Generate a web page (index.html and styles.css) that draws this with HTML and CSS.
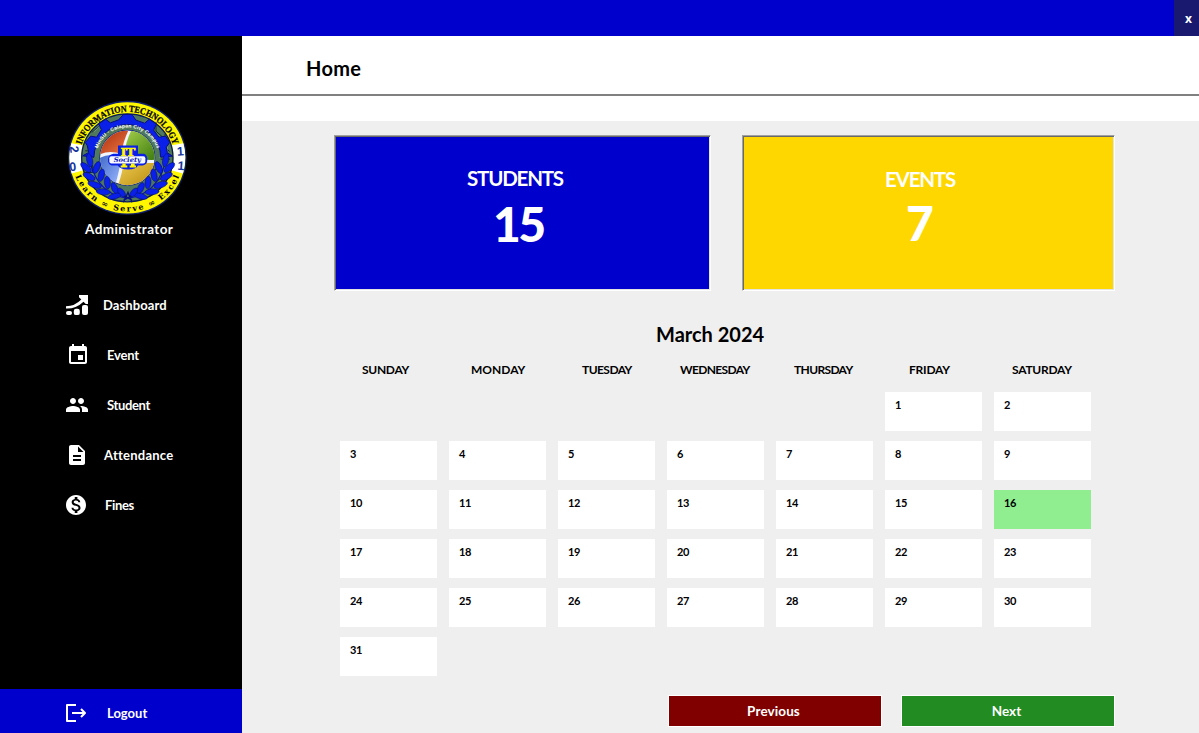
FILE: index.html
```html
<!DOCTYPE html>
<html lang="en">
<head>
<meta charset="utf-8">
<title>Home</title>
<link rel="stylesheet" href="styles.css">
</head>
<body>
<div class="window">
  <header class="titlebar"><button class="close">x</button></header>
  <div class="body">
    <aside class="sidebar">
      <div class="profile">
        <svg class="logo" viewBox="21 21 360 348">
          <defs>
            <path id="arcTop" d="M59 196a143 138 0 0 1 286 0"/>
            <path id="arcCampus" d="M109 196a93 91 0 0 1 186 0"/>
            <path id="arcBottom" d="M36 196a166 161 0 0 0 332 0"/>
            <clipPath id="globe"><circle cx="202" cy="196" r="82"/></clipPath>
            <linearGradient id="red" x1="0" y1="0" x2="1" y2="1"><stop offset="0" stop-color="#a82b0c"/><stop offset="1" stop-color="#f07a45"/></linearGradient>
            <linearGradient id="green" x1="0" y1="0" x2="1" y2="1"><stop offset="0" stop-color="#a6cf4a"/><stop offset="1" stop-color="#3d7c10"/></linearGradient>
            <linearGradient id="blue" x1="0" y1="0" x2="1" y2="1"><stop offset="0" stop-color="#3f68c8"/><stop offset="1" stop-color="#9db8ff"/></linearGradient>
            <linearGradient id="gold" x1="0" y1="0" x2="1" y2="1"><stop offset="0" stop-color="#f2d35c"/><stop offset="1" stop-color="#b98a0a"/></linearGradient>
            <g id="branch">
              <path d="M196 316Q118 304 91 214" fill="none" stroke="#0714b8" stroke-width="4"/>
              <g fill="#0a20e8" stroke="#020b70" stroke-width="1.5">
                <ellipse cx="89" cy="203" rx="9" ry="20" transform="rotate(-12 89 203)"/>
                <ellipse cx="78" cy="225" rx="9" ry="20" transform="rotate(-48 78 225)"/>
                <ellipse cx="110" cy="225" rx="9" ry="19" transform="rotate(24 110 225)"/>
                <ellipse cx="87" cy="252" rx="9" ry="20" transform="rotate(-62 87 252)"/>
                <ellipse cx="124" cy="248" rx="9" ry="19" transform="rotate(12 124 248)"/>
                <ellipse cx="104" cy="277" rx="9" ry="21" transform="rotate(-72 104 277)"/>
                <ellipse cx="142" cy="270" rx="9" ry="19" transform="rotate(-5 142 270)"/>
                <ellipse cx="130" cy="298" rx="9" ry="21" transform="rotate(-86 130 298)"/>
                <ellipse cx="164" cy="287" rx="9" ry="18" transform="rotate(-25 164 287)"/>
                <ellipse cx="164" cy="311" rx="8" ry="21" transform="rotate(-105 164 311)"/>
                <ellipse cx="185" cy="300" rx="8" ry="16" transform="rotate(-40 185 300)"/>
              </g>
            </g>
          </defs>
          <ellipse cx="202" cy="196" rx="178" ry="171" fill="#10206e"/>
          <ellipse cx="202" cy="196" rx="174" ry="167" fill="#fff600"/>
          <path d="M34 152Q22 196 35 243L68 234Q58 196 68 158ZM370 152Q382 196 369 243L336 234Q346 196 336 158Z" fill="#fff"/>
          <ellipse cx="202" cy="196" rx="137" ry="132" fill="#50785c" stroke="#0b1d58" stroke-width="4"/>
          <g fill="none" stroke="#16301f" stroke-width="3">
            <path d="M95 120l24-20v-15M115 135l20-25M288 88v28l20 18M270 80v22M315 125v40l14 12M76 175h24v20M72 240h26v-22M130 250v-25l-20-16M304 220v36l-18 14M330 200h-28M280 240l16-22M108 165l-16-12M300 176h24"/>
          </g>
          <g fill="none" stroke="#8bb19a" stroke-width="2">
            <path d="M102 118l22-22M84 165h20v28M280 94v20l24 22M322 150v34M82 245h22v-20M312 220v28l-10 16M138 262v-22M270 262v-26M120 112l12-14M298 195l22-10"/>
          </g>
          <path d="M68 190L86 180 82 160 76 150 92 131 110 134 124 112 116 94 137 80 151 91 176 82 190 66H216L228 83 254 92 268 80 289 95 281 113 297 134 317 131 329 150 319 164 322 181 338 191 302 194A100 98 0 0 0 102 194Z" fill="#0a20e8" stroke="#07107c" stroke-width="3"/>
          <circle cx="202" cy="196" r="84" fill="#0a1a90"/>
          <circle cx="202" cy="196" r="82" fill="#f2f5fb"/>
          <g clip-path="url(#globe)">
            <path d="M119 186Q123 114 205 114Q188 150 184 185Q151 172 119 186Z" fill="url(#red)"/>
            <path d="M214 114Q282 114 286 202Q246 205 193 185Q197 148 214 114Z" fill="url(#green)"/>
            <path d="M117 197Q149 180 183 194Q179 234 165 279Q119 250 117 197Z" fill="url(#blue)"/>
            <path d="M192 195Q241 215 286 211Q275 280 204 280L174 278Q189 238 192 195Z" fill="url(#gold)"/>
          </g>
          <use href="#branch"/>
          <use href="#branch" transform="matrix(-1 0 0 1 406 0)"/>
          <path d="M190 329L204 300 216 329M193 310l23 13M214 310l-23 13" fill="none" stroke="#061083" stroke-width="4"/>
          <path d="M174 159H234V184H252Q262 188 262 201 262 217 248 219H234Q228 231 204 231 181 231 173 219H155Q143 215 144 200 145 187 160 184H174Z" fill="#0a20e8"/>
          <rect x="148" y="191" width="108" height="22" rx="6" fill="#f7f9ff"/>
          <text class="seal-it" x="204" y="189" text-anchor="middle" textLength="44" lengthAdjust="spacingAndGlyphs">IT</text>
          <path d="M187 213h10v6h5v6h-20v-6h5ZM213 213h11v6h4v6h-19v-6h4Z" fill="#fff600"/>
          <text class="seal-society" x="202" y="208" text-anchor="middle" textLength="82" lengthAdjust="spacingAndGlyphs">Society</text>
          <text class="seal-name"><textPath href="#arcTop" startOffset="50%" text-anchor="middle" textLength="362" lengthAdjust="spacingAndGlyphs">INFORMATION TECHNOLOGY</textPath></text>
          <text class="seal-campus"><textPath href="#arcCampus" startOffset="50%" text-anchor="middle" textLength="232">MinSU - Calapan City Campus</textPath></text>
          <text class="seal-motto"><textPath href="#arcBottom" startOffset="50%" text-anchor="middle" textLength="400">Learn ∞ Serve ∞ Excel</textPath></text>
          <g class="seal-year">
            <text transform="translate(29 162) rotate(84)">2</text>
            <text transform="translate(29 236) rotate(-6)">0</text>
            <text transform="translate(352 190) rotate(-4)">1</text>
            <text transform="translate(352 232) rotate(4)">1</text>
          </g>
        </svg>
        <div class="role">Administrator</div>
      </div>
      <nav class="menu">
        <a class="item dashboard">
          <svg viewBox="0 0 24 24"><rect x="1" y="18" width="6" height="4" rx="2"/><rect x="8.8" y="15.8" width="6" height="6.3" rx="2.2"/><rect x="17" y="12" width="6" height="10.1" rx="2"/><path d="M1 15.6V13.2Q10 13 16.3 6.4L14 4.2V2H23V11H20.8L18.5 8.8Q11 16 1 15.6Z"/></svg>
          <span>Dashboard</span></a>
        <a class="item event">
          <svg viewBox="0 0 24 24"><path d="M17 12h-5v5h5v-5zM16 1v2H8V1H6v2H5c-1.11 0-1.99.9-1.99 2L3 19c0 1.1.89 2 2 2h14c1.1 0 2-.9 2-2V5c0-1.1-.9-2-2-2h-1V1h-2zm3 18H5V8h14v11z"/></svg>
          <span>Event</span></a>
        <a class="item student">
          <svg viewBox="0 0 24 24"><path d="M16 11c1.66 0 2.99-1.34 2.99-3S17.66 5 16 5c-1.66 0-3 1.34-3 3s1.34 3 3 3zm-8 0c1.66 0 2.99-1.34 2.99-3S9.66 5 8 5C6.34 5 5 6.34 5 8s1.34 3 3 3zm0 2c-2.33 0-7 1.17-7 3.5V19h14v-2.5c0-2.33-4.67-3.5-7-3.5zm8 0c-.29 0-.62.02-.97.05 1.16.84 1.97 1.97 1.97 3.45V19h6v-2.5c0-2.33-4.67-3.5-7-3.5z"/></svg>
          <span>Student</span></a>
        <a class="item attendance">
          <svg viewBox="0 0 24 24"><path d="M14 2H6c-1.1 0-1.99.9-1.99 2L4 20c0 1.1.89 2 1.99 2H18c1.1 0 2-.9 2-2V8l-6-6zm2 16H8v-2h8v2zm0-4H8v-2h8v2zm-3-5V3.5L18.5 9H13z"/></svg>
          <span>Attendance</span></a>
        <a class="item fines">
          <svg viewBox="0 0 24 24"><path d="M12 2C6.48 2 2 6.48 2 12s4.48 10 10 10 10-4.48 10-10S17.52 2 12 2zm1.41 16.09V20h-2.67v-1.93c-1.71-.36-3.16-1.46-3.27-3.4h1.96c.1 1.05.82 1.87 2.65 1.87 1.96 0 2.4-.98 2.4-1.59 0-.83-.44-1.61-2.67-2.14-2.48-.6-4.18-1.62-4.18-3.67 0-1.72 1.39-2.84 3.11-3.21V4h2.67v1.95c1.86.45 2.79 1.86 2.85 3.39H14.3c-.05-1.11-.64-1.87-2.22-1.87-1.5 0-2.4.68-2.4 1.64 0 .84.65 1.39 2.67 1.91s4.18 1.39 4.18 3.91c-.01 1.83-1.38 2.83-3.12 3.16z"/></svg>
          <span>Fines</span></a>
      </nav>
      <a class="item logout">
        <svg viewBox="0 0 24 24"><path d="M12 4H3V20H12M8 12H21M17 8L21 12L17 16" fill="none" stroke="#fff" stroke-width="2" stroke-linejoin="round"/></svg>
        <span>Logout</span></a>
    </aside>
    <main class="main">
      <div class="page-head"><h1>Home</h1></div>
      <div class="page-sub"></div>
      <section class="cards">
        <div class="card students"><div class="card-title">STUDENTS</div><div class="card-value">15</div></div>
        <div class="card events"><div class="card-title">EVENTS</div><div class="card-value">7</div></div>
      </section>
      <h2 class="month">March 2024</h2>
      <div class="weekdays">
        <span class="sun">SUNDAY</span><span class="mon">MONDAY</span><span class="tue">TUESDAY</span><span class="wed">WEDNESDAY</span><span class="thu">THURSDAY</span><span class="fri">FRIDAY</span><span class="sat">SATURDAY</span>
      </div>
      <div class="days">
        <div class="day first">1</div><div class="day">2</div>
        <div class="day">3</div><div class="day">4</div><div class="day">5</div><div class="day">6</div><div class="day">7</div><div class="day">8</div><div class="day">9</div>
        <div class="day">10</div><div class="day">11</div><div class="day">12</div><div class="day">13</div><div class="day">14</div><div class="day">15</div><div class="day today">16</div>
        <div class="day">17</div><div class="day">18</div><div class="day">19</div><div class="day">20</div><div class="day">21</div><div class="day">22</div><div class="day">23</div>
        <div class="day">24</div><div class="day">25</div><div class="day">26</div><div class="day">27</div><div class="day">28</div><div class="day">29</div><div class="day">30</div>
        <div class="day">31</div>
      </div>
      <div class="pager"><button class="prev">Previous</button><button class="next">Next</button></div>
    </main>
  </div>
</div>
</body>
</html>
```
FILE: styles.css
```css
* { box-sizing: border-box; }
body { margin: 0; font-family: "Century Gothic", Lato, sans-serif; font-weight: 700; color: #000; }
h1, h2 { margin: 0; }
button { font: inherit; color: #fff; padding: 0; border: 0; }
.window { width: 1199px; height: 733px; display: flex; flex-direction: column; overflow: hidden; background: #efefef; }
.titlebar { height: 36px; flex: none; display: flex; justify-content: flex-end; background: #0000cd; }
.close { width: 25px; padding-left: 4px; background: #191970; font: 700 12px "Open Sans", sans-serif; }
.body { flex: 1; display: flex; min-height: 0; }

.sidebar { width: 242px; flex: none; display: flex; flex-direction: column; background: #000; color: #fff; }
.profile { height: 244px; padding: 63px 0 0 67px; }
.logo { display: block; width: 120px; height: 117px; }
.role { margin: 4px 0 0 18px; font-size: 13.5px; line-height: 18px; letter-spacing: .4px; }
.menu { flex: 1; }
.item { display: flex; align-items: center; height: 50px; font-size: 13px; }
.item svg { width: 24px; height: 24px; flex: none; fill: #fff; }
.dashboard { padding-left: 65px; }
.dashboard span { margin-left: 14px; letter-spacing: .1px; }
.event { padding-left: 66px; }
.event span { margin-left: 17px; letter-spacing: -.2px; }
.student { padding-left: 65px; }
.student span { margin-left: 18px; letter-spacing: -.35px; }
.attendance { padding-left: 65px; }
.attendance span { margin-left: 15px; letter-spacing: .25px; }
.fines { padding-left: 64px; }
.fines span { margin-left: 17px; letter-spacing: -.35px; }
.logout { height: 44px; padding: 4px 0 0 64px; background: #0000cd; }
.logout span { margin-left: 19px; }

.seal-it { font: 900 36px "Liberation Serif", serif; fill: #fff600; stroke: #fff600; stroke-width: 2px; }
.seal-society { font: italic 700 20px "DejaVu Serif", serif; fill: #0a18b8; }
.seal-name { font: 900 28px "Liberation Serif", serif; fill: #000; stroke: #000; stroke-width: .8px; }
.seal-campus { font: 700 15px "Liberation Sans", sans-serif; fill: #fff; }
.seal-motto { font: 700 24px "DejaVu Serif", serif; fill: #000; }
.seal-year { font: 900 37px "Liberation Sans", sans-serif; fill: #12349c; }

.main { flex: 1; min-width: 0; background: #efefef; }
.page-head { height: 60px; padding: 6px 0 0 64px; background: #fff; border-bottom: 2px solid #808080; display: flex; align-items: center; }
.page-head h1 { font-size: 20px; line-height: 24px; letter-spacing: .3px; }
.page-sub { height: 25px; background: #fff; }
.cards { display: flex; gap: 31px; padding: 14px 0 0 92px; }
.card { height: 156px; border: 1px solid; border-color: #a0a0a0 #fff #fff #a0a0a0; box-shadow: inset 1px 1px #696969, inset -1px -1px #e3e3e3; color: #fff; }
.students { width: 377px; background: #0000cd; padding: 29px 0 0 132px; }
.events { width: 373px; background: #ffd700; padding: 30px 0 0 142px; }
.card-title { font-size: 20.5px; line-height: 26px; letter-spacing: -1.2px; }
.card-value { font-size: 48px; line-height: 58px; font-weight: 900; letter-spacing: -2.5px; }
.students .card-value { margin: 4px 0 0 26px; }
.events .card-value { margin: 2px 0 0 21px; }
.month { margin: 31px 0 0 414px; font-size: 20px; line-height: 24px; }
.weekdays { display: grid; grid-template-columns: repeat(7, 109px); margin: 16px 0 0 98px; font-size: 12px; line-height: 16px; height: 16px; }
.sun { padding-left: 22px; letter-spacing: -.3px; }
.mon { padding-left: 22px; }
.tue { padding-left: 24px; letter-spacing: -.55px; }
.wed { padding-left: 13px; letter-spacing: -.65px; }
.thu { padding-left: 18px; letter-spacing: -.65px; }
.fri { padding-left: 24px; letter-spacing: -.2px; }
.sat { padding-left: 18px; letter-spacing: -.25px; }
.days { display: grid; grid-template-columns: repeat(7, 97px); grid-auto-rows: 39px; gap: 10px 12px; margin: 14px 0 0 98px; }
.day { background: #fff; padding: 6px 0 0 10px; font-size: 11px; line-height: 14px; letter-spacing: -.3px; }
.first { grid-column: 6; }
.today { background: #90ee90; }
.pager { display: flex; gap: 19px; margin: 19px 0 0 426px; }
.pager button { width: 214px; height: 32px; border: 1px solid #fff; font-size: 13.5px; }
.prev { background: #800000; padding-right: 3px; letter-spacing: .1px; }
.next { background: #228b22; padding-right: 3px; }
```
